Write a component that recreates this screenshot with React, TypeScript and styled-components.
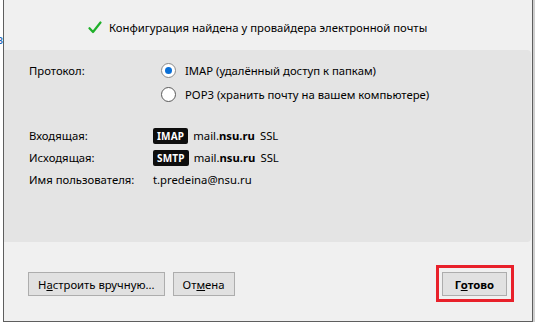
import React from "react";
import styled, { createGlobalStyle } from "styled-components";

const Global = createGlobalStyle`
  html, body { margin: 0; padding: 0; background: #ffffff; overflow: hidden; }
  body { font-family: "Noto Sans", "Segoe UI", sans-serif; font-size: 11.3px; color: #000; }
`;

const Screen = styled.div`
  display: flex;
  align-items: flex-start;
  width: 536px;
  height: 325px;
  overflow: hidden;
`;

const Gutter = styled.div`
  width: 3px;
  flex: none;
  overflow: hidden;
  padding-top: 31px;
  color: #1a5fb4;
  font-size: 12px;
  direction: rtl;
`;

const Column = styled.div`
  display: flex;
  flex-direction: column;
  flex: none;
`;

const Dialog = styled.div`
  flex: none;
  width: 528px;
  height: 321px;
  background: #f0f0f0;
  border-left: 1px solid #5e5e5e;
  border-right: 1px solid #5e5e5e;
  border-bottom: 1px solid #5e5e5e;
  box-shadow: 2px 0 0 #cfcfcf;
  display: flex;
  flex-direction: column;
`;

const Header = styled.div`
  height: 50px;
  display: flex;
  align-items: center;
  padding-left: 84px;
  gap: 7px;
  padding-top: 4px;
  box-sizing: border-box;
`;

const Panel = styled.div`
  flex: none;
  height: 192px;
  background: #e4e4e4;
  border-radius: 0 4px 4px 0;
  margin-right: 1px;
  padding: 12px 0 0 25px;
  box-sizing: border-box;
  display: flex;
  flex-direction: column;
`;

const ProtocolRow = styled.div`
  display: grid;
  grid-template-columns: 132px auto;
  align-items: start;
`;

const Options = styled.div`
  display: flex;
  flex-direction: column;
  gap: 7px;
`;

const Option = styled.label`
  display: flex;
  align-items: center;
  gap: 9px;
  height: 17px;
`;

const Radio = styled.span<{ $checked?: boolean }>`
  width: 13px;
  height: 13px;
  border-radius: 50%;
  background: #fff;
  border: 1px solid ${(p) => (p.$checked ? "#8a8a8a" : "#5a5a5a")};
  display: flex;
  align-items: center;
  justify-content: center;
  &::after {
    content: "";
    width: 7px;
    height: 7px;
    border-radius: 50%;
    background: ${(p) => (p.$checked ? "#0a6fd6" : "transparent")};
  }
`;

const Label = styled.span`
  height: 17px;
  display: flex;
  align-items: center;
`;

const Details = styled.div`
  margin-top: 24px;
  display: grid;
  grid-template-columns: 124px auto;
  row-gap: 5px;
  align-items: center;
`;

const DetailValue = styled.div`
  display: flex;
  align-items: center;
  gap: 5px;
  height: 17px;
`;

const Badge = styled.span`
  background: #0d0d0d;
  color: #fff;
  font-weight: 700;
  font-size: 10px;
  border-radius: 2px;
  padding: 0 4px;
  height: 16px;
  display: flex;
  align-items: center;
  letter-spacing: 0.2px;
`;

const Host = styled.span`
  b { font-weight: 700; }
`;

const Footer = styled.div`
  flex: 1;
  display: flex;
  align-items: flex-start;
  padding: 30px 24px 0 24px;
  gap: 8px;
`;

const Button = styled.button<{ $primary?: boolean }>`
  font-family: inherit;
  font-size: 11.3px;
  font-weight: ${(p) => (p.$primary ? 700 : 400)};
  height: 24px;
  padding: 0 ${(p) => (p.$primary ? "12px" : "9px")};
  background: #e1e1e1;
  border: 1px solid #adadad;
  color: #000;
  border-radius: 0;
  u { text-decoration: underline; }
`;

const Spacer = styled.div`
  flex: 1;
`;

const Highlight = styled.div`
  border: 3px solid #e8202a;
  padding: 4px 4px 3px 3px;
  margin-top: -7px;
  margin-right: -6px;
`;

const Below = styled.div`
  padding-left: 170px;
  margin-top: 1px;
  color: #1a3f7a;
  font-size: 12px;
  white-space: nowrap;
`;

const Check = () => (
  <svg width="14" height="13" viewBox="0 0 14 13">
    <path d="M1.5 7.2 L5 11 L12.5 1.5" fill="none" stroke="#1fb02a" strokeWidth="2.2" strokeLinecap="round" strokeLinejoin="round" />
  </svg>
);

export default function App() {
  return (
    <>
      <Global />
      <Screen>
        <Gutter>з</Gutter>
        <Column>
          <Dialog>
            <Header>
              <Check />
              <span>Конфигурация найдена у провайдера электронной почты</span>
            </Header>
            <Panel>
              <ProtocolRow>
                <Label>Протокол:</Label>
                <Options>
                  <Option>
                    <Radio $checked />
                    <span>IMAP (удалённый доступ к папкам)</span>
                  </Option>
                  <Option>
                    <Radio />
                    <span>POP3 (хранить почту на вашем компьютере)</span>
                  </Option>
                </Options>
              </ProtocolRow>
              <Details>
                <Label>Входящая:</Label>
                <DetailValue>
                  <Badge>IMAP</Badge>
                  <Host>mail.<b>nsu.ru</b></Host>
                  <span>SSL</span>
                </DetailValue>
                <Label>Исходящая:</Label>
                <DetailValue>
                  <Badge>SMTP</Badge>
                  <Host>mail.<b>nsu.ru</b></Host>
                  <span>SSL</span>
                </DetailValue>
                <Label>Имя пользователя:</Label>
                <DetailValue>t.predeina@nsu.ru</DetailValue>
              </Details>
            </Panel>
            <Footer>
              <Button>Н<u>а</u>строить вручную...</Button>
              <Button>От<u>м</u>ена</Button>
              <Spacer />
              <Highlight>
                <Button $primary>Г<u>о</u>тово</Button>
              </Highlight>
            </Footer>
          </Dialog>
          <Below>Mozilla Thunderbird</Below>
        </Column>
      </Screen>
    </>
  );
}
